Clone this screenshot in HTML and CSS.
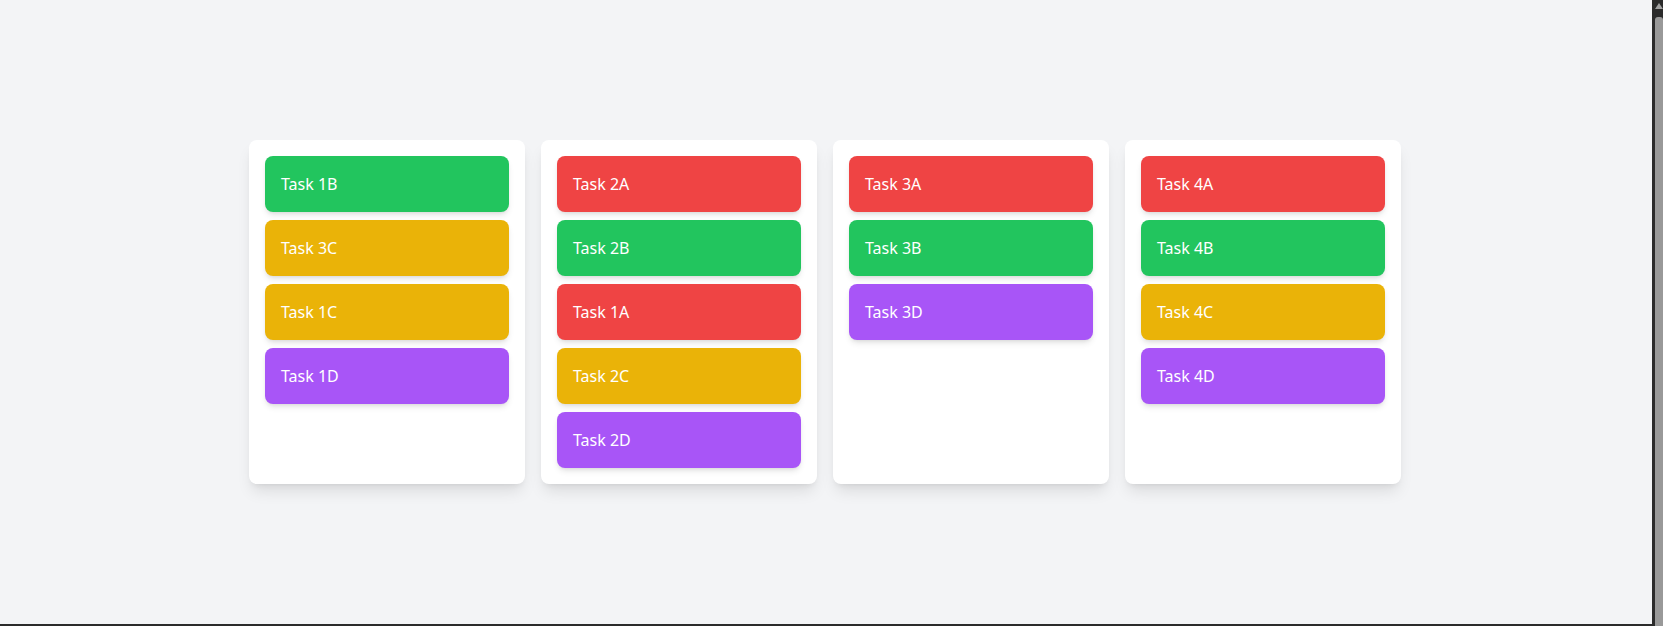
FILE: index.html
```html
<!DOCTYPE html>
<html lang="en">
<head>
<meta charset="utf-8">
<title>Board</title>
<link rel="stylesheet" href="styles.css">
</head>
<body>
<div class="window">
  <main class="page">
    <div class="board">
      <section class="column">
        <div class="task green">Task 1B</div>
        <div class="task yellow">Task 3C</div>
        <div class="task yellow">Task 1C</div>
        <div class="task purple">Task 1D</div>
      </section>
      <section class="column">
        <div class="task red">Task 2A</div>
        <div class="task green">Task 2B</div>
        <div class="task red">Task 1A</div>
        <div class="task yellow">Task 2C</div>
        <div class="task purple">Task 2D</div>
      </section>
      <section class="column">
        <div class="task red">Task 3A</div>
        <div class="task green">Task 3B</div>
        <div class="task purple">Task 3D</div>
      </section>
      <section class="column">
        <div class="task red">Task 4A</div>
        <div class="task green">Task 4B</div>
        <div class="task yellow">Task 4C</div>
        <div class="task purple">Task 4D</div>
      </section>
    </div>
  </main>
  <div class="scrollbar">
    <div class="arrow"></div>
    <div class="thumb"></div>
  </div>
</div>
</body>
</html>
```

FILE: styles.css
```css
html, body {
  margin: 0;
  padding: 0;
  height: 100%;
  overflow: hidden;
}
body {
  font-family: "Segoe UI", "Noto Sans", "Open Sans", sans-serif;
  background: #2b2b2b;
}
.window {
  display: flex;
  height: 626px;
}
.page {
  flex: 1;
  background: #f3f4f6;
  height: 624px;
  padding-right: 2px;
  display: flex;
  align-items: center;
  justify-content: center;
}
.board {
  display: flex;
  gap: 16px;
  align-items: stretch;
}
.column {
  width: 244px;
  padding: 16px;
  background: #ffffff;
  border-radius: 8px;
  box-shadow: 0 10px 15px -3px rgba(0,0,0,0.1), 0 4px 6px -4px rgba(0,0,0,0.1);
  display: flex;
  flex-direction: column;
  gap: 8px;
}
.task {
  height: 24px;
  padding: 16px;
  border-radius: 8px;
  color: #ffffff;
  font-size: 16px;
  line-height: 24px;
  box-shadow: 0 4px 6px -1px rgba(0,0,0,0.1), 0 2px 4px -2px rgba(0,0,0,0.1);
}
.green { background: #22c55e; }
.yellow { background: #eab308; }
.red { background: #ef4444; }
.purple { background: #a855f7; }
.scrollbar {
  width: 8px;
  padding-left: 3px;
  background: #2b2b2b;
  display: flex;
  flex-direction: column;
  align-items: center;
}
.arrow {
  margin-top: 3px;
  width: 0;
  height: 0;
  border-left: 4px solid transparent;
  border-right: 4px solid transparent;
  border-bottom: 6px solid #a0a0a0;
}
.thumb {
  margin-top: 8px;
  width: 8px;
  flex: 1;
  background: #999999;
  border-radius: 3px 3px 0 0;
}
```
